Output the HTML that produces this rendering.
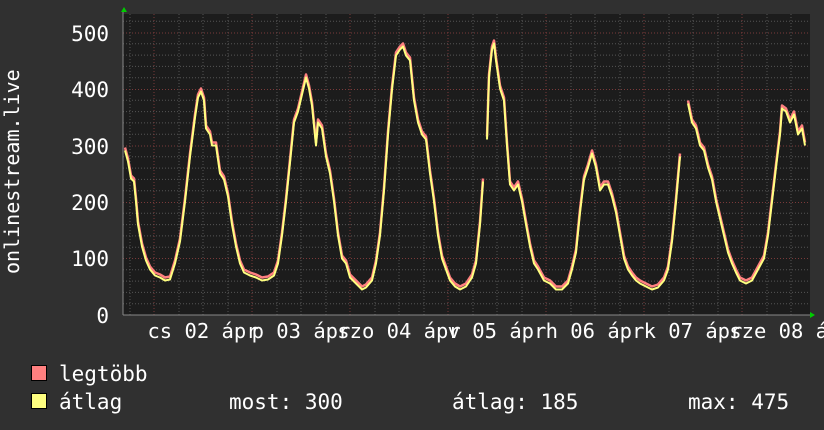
<!DOCTYPE html>
<html><head><meta charset="utf-8"><style>
html,body{margin:0;padding:0;background:#303030;}
svg{display:block;}
text{font-family:"DejaVu Sans Mono","Liberation Mono",monospace;fill:#fff;}
</style></head><body>
<svg width="824" height="430" xmlns="http://www.w3.org/2000/svg">
<rect width="824" height="430" fill="#303030"/>
<rect x="123" y="14" width="687" height="301" fill="#1c1c1c"/>
<g stroke="#555" stroke-width="1" stroke-dasharray="1,2">
<path d="M123 303.7H810M123 292.4H810M123 281.1H810M123 269.8H810M123 247.2H810M123 235.9H810M123 224.6H810M123 213.3H810M123 190.7H810M123 179.4H810M123 168.1H810M123 156.8H810M123 134.2H810M123 122.9H810M123 111.6H810M123 100.3H810M123 77.7H810M123 66.4H810M123 55.1H810M123 43.8H810M123 21.2H810"/>
<path d="M130 14V315M179 14V315M203 14V315M228 14V315M277 14V315M301 14V315M326 14V315M375 14V315M399 14V315M424 14V315M473 14V315M497 14V315M522 14V315M571 14V315M595 14V315M620 14V315M669 14V315M693 14V315M718 14V315M767 14V315M791 14V315"/>
</g>
<g stroke="#7a3a3a" stroke-width="1" stroke-dasharray="1,2">
<path d="M123 33H810M123 89.5H810M123 146H810M123 202.5H810M123 258.5H810"/>
<path d="M154 14V315M252 14V315M350 14V315M448 14V315M546 14V315M644 14V315M742 14V315"/>
</g>
<line x1="123" y1="315" x2="812" y2="315" stroke="#888"/>
<line x1="123" y1="315" x2="123" y2="10" stroke="#888"/>
<polygon points="121,12 127,12 124,7" fill="#0c0"/>
<polygon points="810,312 810,318 815,315" fill="#0c0"/>
<g fill="none" stroke-linejoin="round" transform="translate(0,-2.5)">
<g stroke="#ff8080" stroke-width="2.5">
<polyline id="a" points="125,150 128,161 131,178 134,181 136,201 138,224 142,246 146,260 150,269 155,275 160,277 165,280 170,279 175,263 180,241 185,201 190,156 195,117 198,97 201,91 204,100 206,128 210,134 212,145 216,145 220,173 224,179 228,196 232,224 236,246 240,263 244,272 250,275 256,277 262,280 268,279 274,275 278,263 282,235 286,201 290,162 294,122 298,111 302,94 306,77 309,88 312,105 316,145 318,122 322,128 326,156 330,173 334,201 338,235 342,258 346,263 350,277 356,283 362,289 366,287 372,280 376,263 380,235 384,190 388,134 392,89 396,55 400,49 403,46 406,55 410,60 414,100 418,122 422,134 426,139 430,173 434,201 438,235 442,258 446,269 450,280 455,286 460,289 466,286 472,277 476,263 480,224 483,181"/>
<polyline id="b" points="487,139 489,77 492,49 494,43 496,60 500,88 504,100 507,145 510,184 514,190 518,184 522,201 526,224 530,246 534,263 538,269 544,280 550,283 556,289 562,289 568,283 572,269 576,252 580,212 584,179 588,167 592,153 596,167 600,190 604,184 608,184 612,196 616,212 620,235 624,258 628,269 632,275 636,280 640,283 646,286 652,289 658,287 664,280 668,269 672,241 676,201 680,156"/>
<polyline id="c" points="688,103 692,122 696,128 700,145 704,150 708,167 712,179 716,201 720,218 724,235 728,252 732,263 736,272 740,280 746,283 752,280 758,269 764,258 768,235 772,201 776,167 780,134 782,108 786,111 790,122 794,114 798,134 802,128 805,145"/>
</g>
<g stroke="#ffff80" stroke-width="2" transform="translate(0,3)">
<use href="#a"/><use href="#b"/><use href="#c"/>
</g>
</g>
<g font-size="21" text-anchor="end">
<text x="109" y="41">500</text>
<text x="109" y="97">400</text>
<text x="109" y="154">300</text>
<text x="109" y="210">200</text>
<text x="109" y="266">100</text>
<text x="109" y="323">0</text>
</g>
<text font-size="20" transform="translate(19,274) rotate(-90)">onlinestream.live</text>
<g font-size="20.5" text-anchor="middle">
<text x="203" y="338">cs 02 ápr</text>
<text x="301" y="338">p 03 ápr</text>
<text x="399" y="338">szo 04 ápr</text>
<text x="497" y="338">v 05 ápr</text>
<text x="595" y="338">h 06 ápr</text>
<text x="693" y="338">k 07 ápr</text>
<text x="791" y="338">sze 08 ápr</text>
</g>
<rect x="31.5" y="365.5" width="15" height="15" fill="#ff8080" stroke="#000"/>
<rect x="31.5" y="393.5" width="15" height="15" fill="#ffff80" stroke="#000"/>
<g font-size="21">
<text x="59" y="381">legtöbb</text>
<text x="59" y="409">átlag</text>
<text x="229" y="409">most: 300</text>
<text x="452" y="409">átlag: 185</text>
<text x="688" y="409">max: 475</text>
</g>
</svg>
</body></html>
